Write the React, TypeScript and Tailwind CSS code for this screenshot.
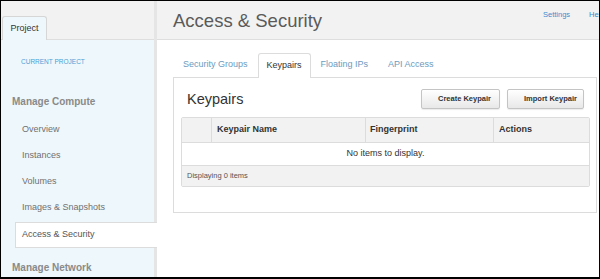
import React from 'react';

const computeItems = ['Overview', 'Instances', 'Volumes', 'Images & Snapshots'];
const tabs = ['Security Groups', 'Keypairs', 'Floating IPs', 'API Access'];

const Sidebar: React.FC = () => (
  <div className="w-[156px] shrink-0 h-full flex flex-col border-r-[3px] border-[#e5e5e5]">
    {/* Dashboard tabs */}
    <div className="h-[39px] shrink-0 bg-[#f2f2f2] border-b border-[#dedede] flex items-end">
      <div className="ml-[1px] -mb-px w-[45px] h-[24px] bg-[#eef7fc] border-t border-x border-[#d6d6d6] rounded-t-[3px] flex items-center justify-center text-[9px] text-[#333]">
        Project
      </div>
    </div>

    <div className="flex-1 bg-[#eef7fc] flex flex-col">
      <div className="pt-[18px] pl-[20px] text-[6.5px] leading-[8px] text-[#4a9fd6] uppercase">
        Current Project
      </div>
      <div className="mt-[28px] pl-[11px] text-[10px] leading-[16px] font-bold text-[#8a8a8a]">
        Manage Compute
      </div>
      <div className="mt-[7px] flex flex-col">
        {computeItems.map(item => (
          <div key={item} className="h-[26px] flex items-center pl-[21px] text-[9px] text-[#707070]">
            {item}
          </div>
        ))}
        <div className="relative mt-[1px] ml-[14px] -mr-[3px] h-[26px] bg-white border-y border-l border-[#dcdcdc] flex items-center pl-[6px] text-[9px] text-[#555]">
          Access &amp; Security
        </div>
      </div>
      <div className="mt-[12px] pl-[11px] text-[10px] leading-[16px] font-bold text-[#8a8a8a]">
        Manage Network
      </div>
    </div>
  </div>
);

const Button: React.FC<{ label: string; width: string }> = ({ label, width }) => (
  <button
    className={`${width} h-[20px] pl-[16px] text-left text-[7.5px] font-bold text-[#333] border border-[#c4c4c4] rounded-[2px] bg-gradient-to-b from-white to-[#e8e8e8] shadow-[0_1px_1px_rgba(0,0,0,0.08)]`}
  >
    {label}
  </button>
);

const App: React.FC = () => {
  return (
    <div className="w-[600px] h-[279px] border-t border-l border-r border-b-2 border-black bg-white flex overflow-hidden font-['Liberation_Sans',Arial,sans-serif]">
      <Sidebar />

      <div className="flex-1 min-w-0 h-full flex flex-col overflow-hidden">
        {/* Page header */}
        <div className="h-[39px] shrink-0 bg-[#f2f2f2] border-b border-[#dedede] flex">
          <div className="w-[386px] shrink-0 pl-[16px] pt-[1px] flex items-center text-[18.5px] text-[#5a5a5a]">
            Access &amp; Security
          </div>
          <div className="shrink-0 flex gap-[19px] pt-[9px] text-[7.5px] leading-[10px] text-[#3a8dd0] whitespace-nowrap">
            <span>Settings</span>
            <span>Help</span>
          </div>
        </div>

        {/* Tabs */}
        <div className="mt-[13px] pl-[16px] flex relative z-10">
          {tabs.map(tab =>
            tab === 'Keypairs' ? (
              <div
                key={tab}
                className="-mb-px h-[25px] px-[8px] bg-white border-t border-x border-[#dcdcdc] rounded-t-[3px] flex items-center text-[9px] text-[#333]"
              >
                {tab}
              </div>
            ) : (
              <div key={tab} className="h-[24px] px-[10px] flex items-center text-[9px] text-[#6c9bc0]">
                {tab}
              </div>
            )
          )}
        </div>

        {/* Panel */}
        <div className="ml-[16px] w-[424px] border border-[#dcdcdc] pt-[11px] pl-[7px] pr-[6px] pb-[25px]">
          <div className="h-[20px] flex items-center">
            <div className="pl-[6px] pt-[1px] text-[14.5px] text-[#333]">Keypairs</div>
            <div className="ml-auto mr-[6px] flex gap-[7px]">
              <Button label="Create Keypair" width="w-[79px]" />
              <Button label="Import Keypair" width="w-[77px]" />
            </div>
          </div>

          <div className="mt-[8px] border border-[#dcdcdc] rounded-[2px] overflow-hidden">
            <div className="h-[25px] bg-[#f2f2f2] border-b border-[#dcdcdc] flex text-[9px] font-bold text-[#333]">
              <div className="w-[30px] border-r border-[#dcdcdc]" />
              <div className="w-[154px] border-r border-[#dcdcdc] pl-[5px] flex items-center">Keypair Name</div>
              <div className="w-[128px] border-r border-[#dcdcdc] pl-[4px] flex items-center">Fingerprint</div>
              <div className="flex-1 pl-[5px] flex items-center">Actions</div>
            </div>
            <div className="h-[23px] border-b border-[#dcdcdc] flex items-center justify-center text-[9px] text-[#333]">
              No items to display.
            </div>
            <div className="h-[20px] bg-[#f2f2f2] flex items-center pl-[5px] text-[7.5px] text-[#555]">
              Displaying 0 items
            </div>
          </div>
        </div>
      </div>
    </div>
  );
};

export default App;
